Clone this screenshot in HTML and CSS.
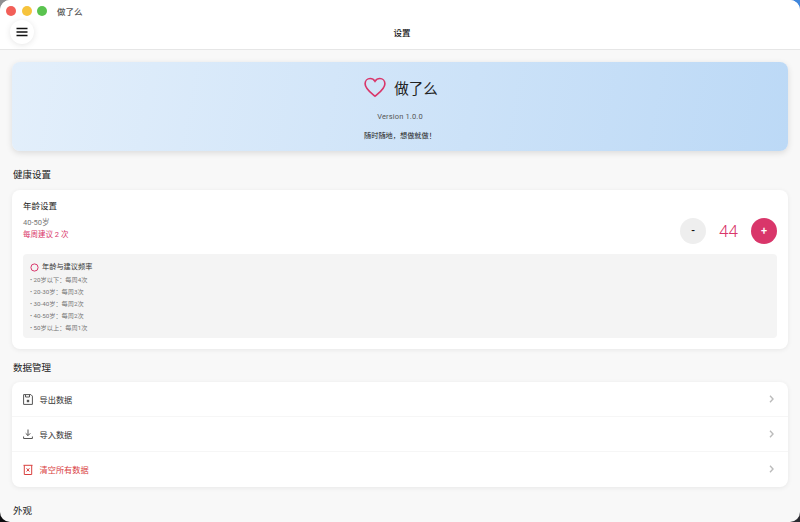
FILE: index.html
```html
<!DOCTYPE html>
<html lang="zh-cn">
<head>
	<meta charset="utf-8">
	<title>做了么</title>
	<link rel="stylesheet" href="styles.css">
</head>
<body>

	<div class="window">
		<div class="titlebar">
			<span class="light light-red"></span>
			<span class="light light-yellow"></span>
			<span class="light light-green"></span>
			<span class="appName">做了么</span>
		</div>
		<div class="toolbar">
			<div class="menuBtn">
				<svg width="14" height="12" viewBox="0 0 14 12"><path d="M1.500 2.500h11M1.500 6h11M1.500 9.500h11" stroke="#111" stroke-width="1.300" fill="none"/></svg>
			</div>
			<div class="pageTitle">设置</div>
		</div>

		<div class="content">
			<div class="banner">
				<div class="brand">
					<svg width="22" height="21" viewBox="0 0 24 22"><path d="M12 20.500C8 17 1.200 12.500 1.200 6.800 1.200 3.600 3.700 1.200 6.700 1.200c2.100 0 4.100 1.100 5.300 3 1.200-1.900 3.200-3 5.300-3 3 0 5.500 2.400 5.500 5.600 0 5.700-6.800 10.200-10.800 13.700z" stroke="#d9366a" stroke-width="1.800" fill="none"/></svg>
					<span class="brandName">做了么</span>
				</div>
				<div class="version">Version 1.0.0</div>
				<div class="slogan">随时随地，想做就做！</div>
			</div>

			<div class="sectionTitle">健康设置</div>
			<div class="card ageCard">
				<div class="ageTop">
					<div class="ageInfo">
						<div class="ageTitle">年龄设置</div>
						<div class="ageRange">40-50岁</div>
						<div class="ageTip">每周建议 2 次</div>
					</div>
					<div class="stepper">
						<div class="stepBtn stepBtn-minus">-</div>
						<div class="stepValue">44</div>
						<div class="stepBtn stepBtn-plus">+</div>
					</div>
				</div>
				<div class="freqBox">
					<div class="freqHead">
						<svg width="9" height="9" viewBox="0 0 10 10"><circle cx="5" cy="5" r="4" stroke="#d9366a" stroke-width="1.100" fill="none"/></svg>
						<span>年龄与建议频率</span>
					</div>
					<div class="freqItem">• 20岁以下：每周4次</div>
					<div class="freqItem">• 20-30岁：每周3次</div>
					<div class="freqItem">• 30-40岁：每周2次</div>
					<div class="freqItem">• 40-50岁：每周2次</div>
					<div class="freqItem">• 50岁以上：每周1次</div>
				</div>
			</div>

			<div class="sectionTitle sectionTitle-tight">数据管理</div>
			<div class="card listCard">
				<div class="listRow">
					<svg class="rowIcon" width="10" height="11" viewBox="0 0 10 11"><path d="M.6.600h7.300l1.500 1.500v8.300H.6zM2.500.600v2.400h4V.600" stroke="#555" stroke-width="1" fill="none"/><path d="M3.800 5.800h2.400v2.400H3.800z" fill="#555"/></svg>
					<span class="rowText">导出数据</span>
					<svg class="rowArrow" width="5" height="8" viewBox="0 0 5 8"><path d="M1 .8l3 3.200-3 3.200" stroke="#bbb" stroke-width="1.400" fill="none"/></svg>
				</div>
				<div class="listRow">
					<svg class="rowIcon" width="10" height="10" viewBox="0 0 10 10"><path d="M5 .5v6M2.700 4.300L5 6.600l2.300-2.300M.6 7.500v2h8.800v-2" stroke="#555" stroke-width="1" fill="none"/></svg>
					<span class="rowText">导入数据</span>
					<svg class="rowArrow" width="5" height="8" viewBox="0 0 5 8"><path d="M1 .8l3 3.200-3 3.200" stroke="#bbb" stroke-width="1.400" fill="none"/></svg>
				</div>
				<div class="listRow listRow-danger">
					<svg class="rowIcon" width="10" height="11" viewBox="0 0 10 11"><path d="M.5 1.300h9M1.300 1.300v9.200h7.400V1.300M3.600 4.300l2.800 3.200M6.400 4.300L3.600 7.500" stroke="#d9413f" stroke-width="1" fill="none"/></svg>
					<span class="rowText">清空所有数据</span>
					<svg class="rowArrow" width="5" height="8" viewBox="0 0 5 8"><path d="M1 .8l3 3.200-3 3.200" stroke="#bbb" stroke-width="1.400" fill="none"/></svg>
				</div>
			</div>

			<div class="sectionTitle">外观</div>
		</div>
	</div>

</body>
</html>
```

FILE: styles.css
```css
*{
	box-sizing: border-box;
}
html, body{
	margin: 0;
	height: 100%;
	overflow: hidden;
}
body{
	background: conic-gradient(#3f86dc 0 90deg, #2a2a30 90deg 180deg, #0c0c0e 180deg 270deg, #8f8f92 270deg);
	font-family: 'Roboto', 'Noto Sans CJK SC', sans-serif;
	color: #222;
}
.window{
	display: flex;
	flex-direction: column;
	height: 522px;
	overflow: hidden;
	border-radius: 10px;
	background: #f8f8f8;
}

.titlebar{
	display: flex;
	flex-shrink: 0;
	align-items: center;
	height: 22px;
	padding-left: 6px;
	background: #fff;
}
.light{
	width: 10px;
	height: 10px;
	margin-right: 5.500px;
	border-radius: 50%;
}
.light-red{
	background: #f25f58;
}
.light-yellow{
	background: #f6c33c;
}
.light-green{
	background: #5ac34f;
}
.appName{
	margin-left: 4.500px;
	font-size: 8.500px;
	font-weight: 500;
	color: #555;
}

.toolbar{
	position: relative;
	height: 28px;
	flex-shrink: 0;
	padding-left: 4px;
	background: #fff;
	border-bottom: 1px solid #e6e6e6;
	text-align: center;
}
.menuBtn{
	position: absolute;
	left: 10px;
	top: -2px;
	display: flex;
	align-items: center;
	justify-content: center;
	width: 24px;
	height: 24px;
	border-radius: 50%;
	background: #fff;
	box-shadow: 0 1px 6px rgba(0,0,0,.1);
}
.pageTitle{
	padding-top: 4px;
	font-size: 8.500px;
	font-weight: 500;
	color: #111;
}

.content{
	flex: 1;
	min-height: 0;
	padding: 12px;
}
.banner{
	height: 89px;
	padding-top: 13px;
	border-radius: 8px;
	background: linear-gradient(100deg, #e3effb, #bcd9f6);
	box-shadow: 0 2px 6px rgba(0,0,0,.12);
	text-align: center;
}
.brand{
	display: flex;
	align-items: center;
	justify-content: center;
	gap: 8px;
	height: 24px;
	padding-left: 2px;
}
.brandName{
	font-size: 14.500px;
	color: #222;
}
.version{
	margin-top: 12px;
	font-size: 7.500px;
	line-height: 11px;
	letter-spacing: .15px;
	color: #555;
}
.slogan{
	margin-top: 8px;
	font-size: 7.200px;
	line-height: 11px;
	color: #222;
}

.sectionTitle{
	margin-top: 16px;
	padding-left: 1px;
	font-size: 9.500px;
	line-height: 15px;
	color: #222;
}
.sectionTitle-tight{
	margin-top: 10.500px;
}
.card{
	margin-top: 8px;
	border-radius: 8px;
	background: #fff;
	box-shadow: 0 1px 5px rgba(0,0,0,.07);
}
.ageCard{
	height: 159px;
	padding: 10px 11px;
}
.ageTop{
	display: flex;
	align-items: center;
	justify-content: space-between;
	height: 54px;
}
.ageInfo{
	align-self: flex-start;
}
.ageTitle{
	font-size: 8.500px;
	line-height: 12px;
	color: #222;
}
.ageRange{
	margin-top: 5px;
	font-size: 7.500px;
	line-height: 11px;
	color: #777;
}
.ageTip{
	margin-top: 1px;
	font-size: 7.500px;
	line-height: 12px;
	color: #d9366a;
}
.stepper{
	display: flex;
	align-items: center;
	margin-top: 7px;
}
.stepBtn{
	display: flex;
	align-items: center;
	justify-content: center;
	width: 26px;
	height: 26px;
	border-radius: 50%;
	font-size: 11px;
	font-weight: 500;
}
.stepBtn-minus{
	background: #eee;
	color: #111;
}
.stepBtn-plus{
	background: #d9366a;
	color: #fff;
}
.stepValue{
	width: 45px;
	font-size: 17px;
	font-weight: 300;
	text-align: center;
	color: #d9366a;
}
.freqBox{
	height: 84px;
	padding: 7px;
	border-radius: 4px;
	background: #f4f4f4;
}
.freqHead{
	display: flex;
	align-items: center;
	gap: 3px;
	margin-bottom: 1px;
	font-size: 7.200px;
	line-height: 12px;
	color: #333;
}
.freqItem{
	padding-top: 1px;
	font-size: 6.200px;
	line-height: 11px;
	color: #777;
}

.listCard{
	height: 105px;
	margin-top: 7.500px;
}
.listRow{
	display: flex;
	align-items: center;
	height: 35px;
	padding: 0 14px 0 10.500px;
	border-bottom: 1px solid #f6f6f6;
	font-size: 8.200px;
	color: #333;
}
.listRow:last-child{
	border-bottom-color: transparent;
}
.listRow-danger{
	color: #d9413f;
}
.rowIcon{
	margin-right: 7px;
}
.rowText{
	flex: 1;
}
```
